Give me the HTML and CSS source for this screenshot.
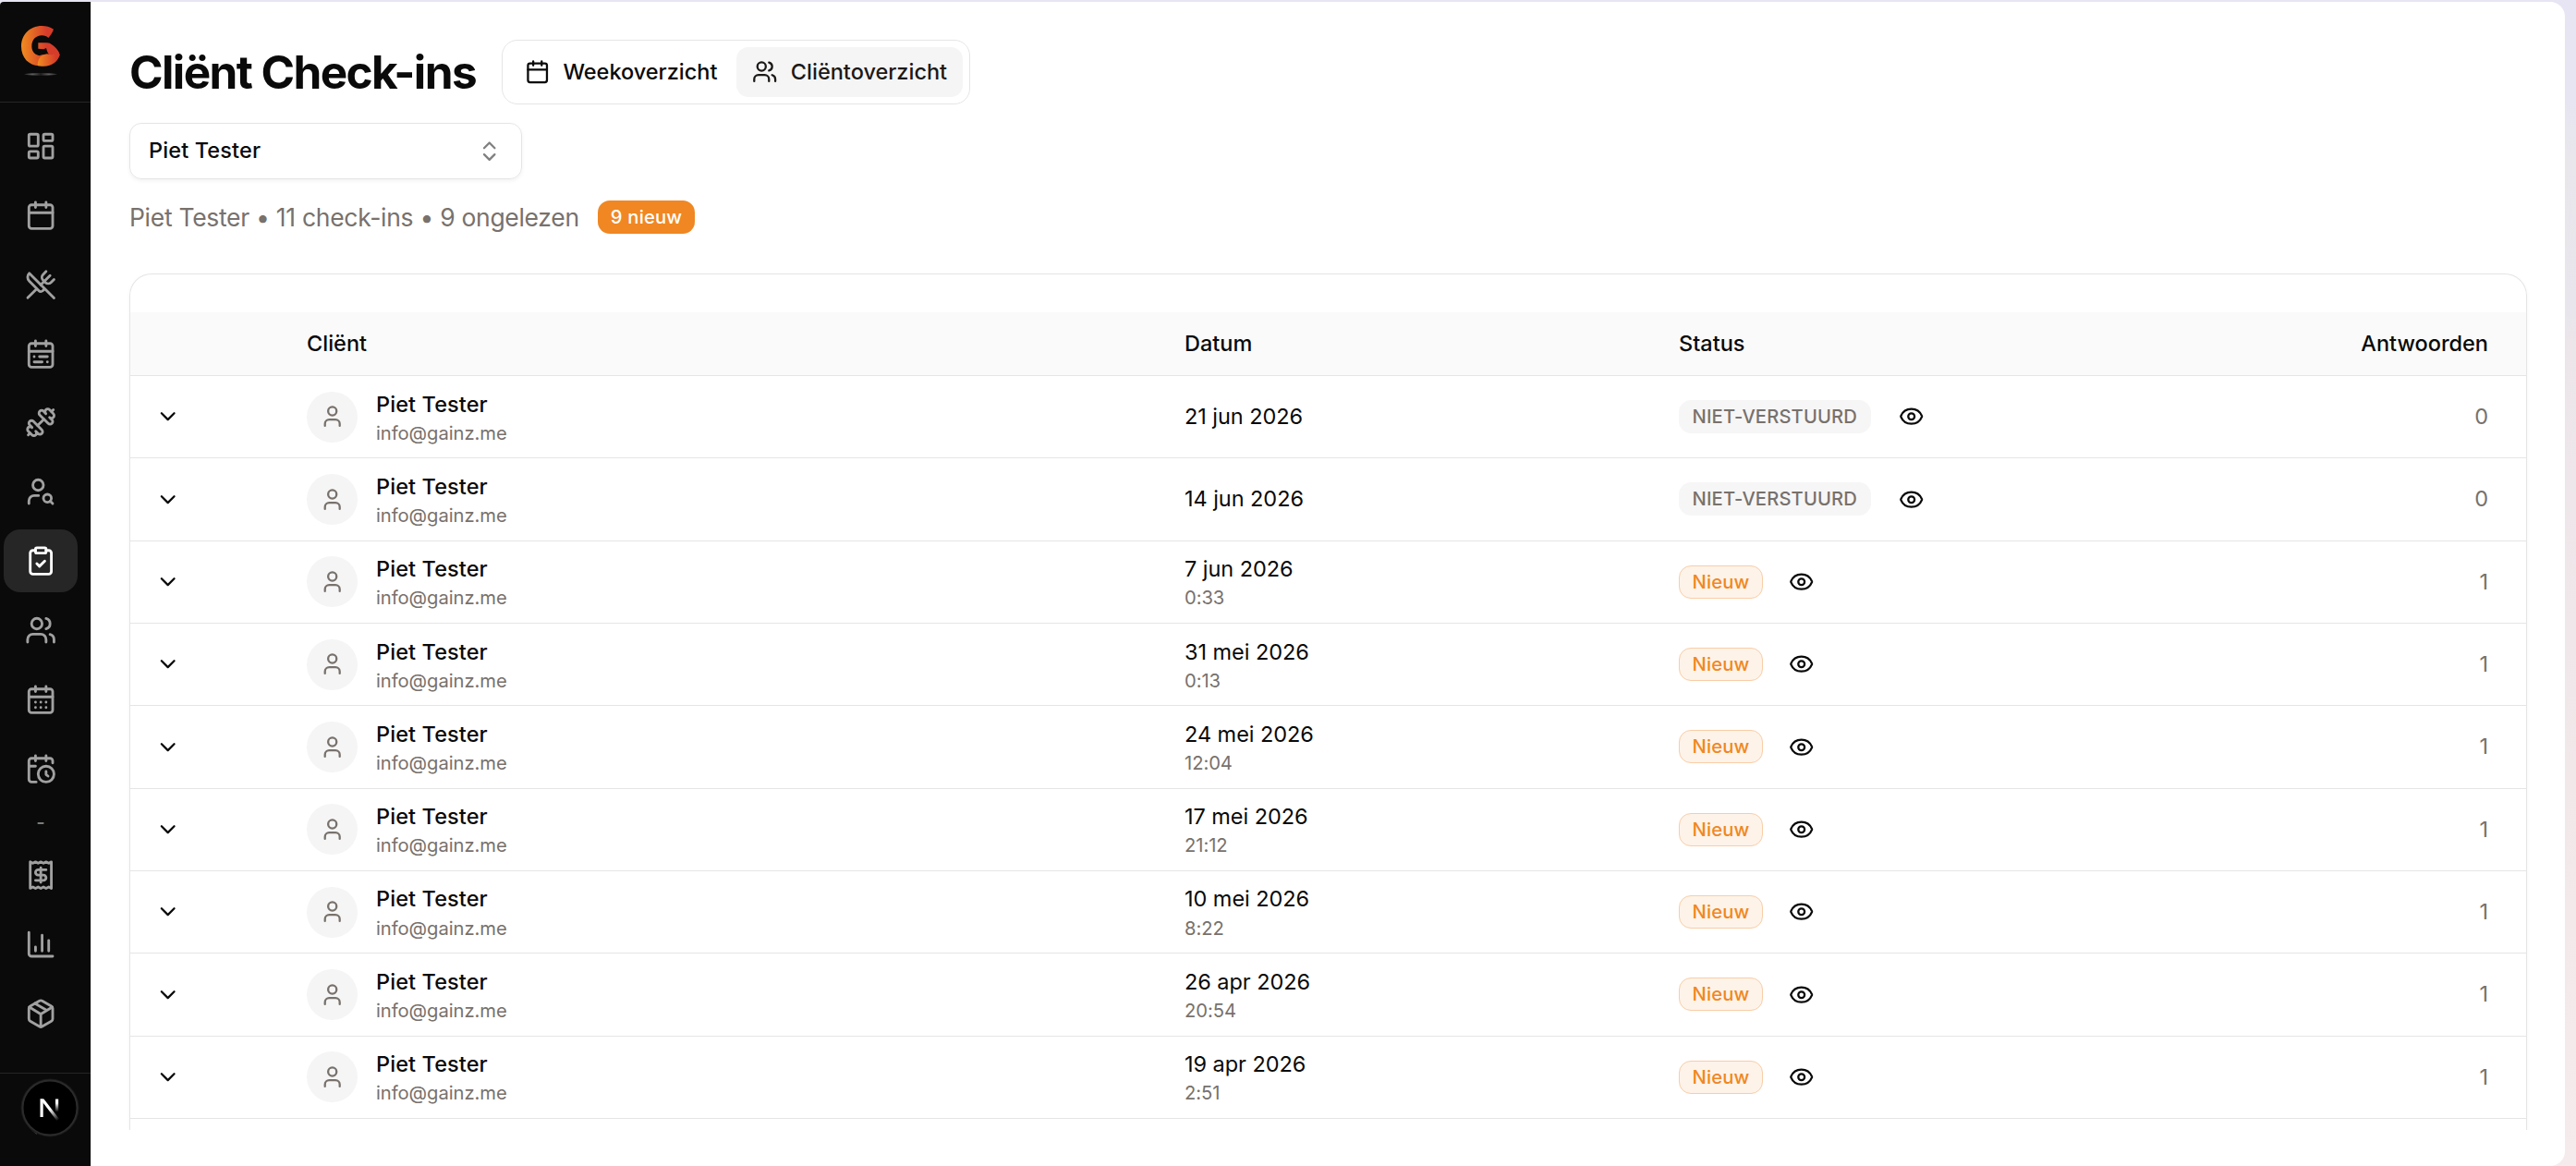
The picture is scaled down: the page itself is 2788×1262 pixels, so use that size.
FILE: index.html
```html
<!DOCTYPE html>
<html lang="nl">
<head>
<meta charset="utf-8">
<title>Cliënt Check-ins</title>
<link rel="stylesheet" href="styles.css">
</head>
<body>
<svg class="sprite" aria-hidden="true">
  <symbol id="dashboard" viewBox="0 0 24 24"><rect x="3" y="3" width="7" height="9" rx="1"/><rect x="14" y="3" width="7" height="5" rx="1"/><rect x="14" y="12" width="7" height="9" rx="1"/><rect x="3" y="16" width="7" height="5" rx="1"/></symbol>
  <symbol id="calendar" viewBox="0 0 24 24"><path d="M8 2v4M16 2v4M3 10h18"/><rect x="3" y="4" width="18" height="18" rx="2"/></symbol>
  <symbol id="utensils" viewBox="0 0 24 24"><path d="m16 2-2.3 2.3a3 3 0 0 0 0 4.2l1.8 1.8a3 3 0 0 0 4.2 0L22 8"/><path d="M15 15 3.3 3.3a4.2 4.2 0 0 0 0 6l7.3 7.3c.7.7 2 .7 2.8 0L15 15Zm0 0 7 7"/><path d="m2.1 21.8 6.4-6.3M19 5l-7 7"/></symbol>
  <symbol id="calendar-range" viewBox="0 0 24 24"><path d="M8 2v4M16 2v4M3 10h18M17 14h-6M13 18H7M7 14h.01M17 18h.01"/><rect x="3" y="4" width="18" height="18" rx="2"/></symbol>
  <symbol id="dumbbell" viewBox="0 0 24 24"><path d="M17.596 12.768a2 2 0 1 0 2.829-2.829l-1.768-1.767a2 2 0 0 0 2.828-2.829l-2.828-2.828a2 2 0 0 0-2.829 2.828l-1.767-1.768a2 2 0 1 0-2.829 2.829z"/><path d="m2.5 21.5 1.4-1.4M20.1 3.9l1.4-1.4"/><path d="M5.343 21.485a2 2 0 1 0 2.829-2.828l1.767 1.768a2 2 0 1 0 2.829-2.829l-6.364-6.364a2 2 0 1 0-2.829 2.829l1.768 1.767a2 2 0 0 0-2.828 2.829z"/><path d="m9.6 14.4 4.8-4.8"/></symbol>
  <symbol id="user-search" viewBox="0 0 24 24"><circle cx="10" cy="7" r="4"/><path d="M10.3 15H7a4 4 0 0 0-4 4v2"/><circle cx="17" cy="17" r="3"/><path d="m21 21-1.9-1.9"/></symbol>
  <symbol id="clipboard" viewBox="0 0 24 24"><rect x="8" y="2" width="8" height="4" rx="1"/><path d="M16 4h2a2 2 0 0 1 2 2v14a2 2 0 0 1-2 2H6a2 2 0 0 1-2-2V6a2 2 0 0 1 2-2h2"/><path d="m9 14 2 2 4-4"/></symbol>
  <symbol id="users" viewBox="0 0 24 24"><path d="M16 21v-2a4 4 0 0 0-4-4H6a4 4 0 0 0-4 4v2"/><circle cx="9" cy="7" r="4"/><path d="M22 21v-2a4 4 0 0 0-3-3.87M16 3.13a4 4 0 0 1 0 7.75"/></symbol>
  <symbol id="calendar-days" viewBox="0 0 24 24"><path d="M8 2v4M16 2v4M3 10h18M8 14h.01M12 14h.01M16 14h.01M8 18h.01M12 18h.01M16 18h.01"/><rect x="3" y="4" width="18" height="18" rx="2"/></symbol>
  <symbol id="calendar-clock" viewBox="0 0 24 24"><path d="M21 7.5V6a2 2 0 0 0-2-2H5a2 2 0 0 0-2 2v14a2 2 0 0 0 2 2h3.5M16 2v4M8 2v4M3 10h5M17.5 17.5 16 16.3V14"/><circle cx="16" cy="16" r="6"/></symbol>
  <symbol id="receipt" viewBox="0 0 24 24"><path d="M4 2v20l2-1 2 1 2-1 2 1 2-1 2 1 2-1 2 1V2l-2 1-2-1-2 1-2-1-2 1-2-1-2 1Z"/><path d="M16 8h-6a2 2 0 1 0 0 4h4a2 2 0 1 1 0 4H8M12 17.5v-11"/></symbol>
  <symbol id="chart" viewBox="0 0 24 24"><path d="M3 3v16a2 2 0 0 0 2 2h16M18 17V9M13 17V5M8 17v-3"/></symbol>
  <symbol id="package" viewBox="0 0 24 24"><path d="M11 21.73a2 2 0 0 0 2 0l7-4A2 2 0 0 0 21 16V8a2 2 0 0 0-1-1.73l-7-4a2 2 0 0 0-2 0l-7 4A2 2 0 0 0 3 8v8a2 2 0 0 0 1 1.73zM12 22V12"/><path d="m3.3 7 7.703 4.734a2 2 0 0 0 1.994 0L20.7 7M7.5 4.27l9 5.15"/></symbol>
  <symbol id="updown" viewBox="0 0 24 24"><path d="m7 15 5 5 5-5M7 9l5-5 5 5"/></symbol>
  <symbol id="chevron" viewBox="0 0 24 24"><path d="m6 9 6 6 6-6"/></symbol>
  <symbol id="user" viewBox="0 0 24 24"><path d="M19 21v-2a4 4 0 0 0-4-4H9a4 4 0 0 0-4 4v2"/><circle cx="12" cy="7" r="4"/></symbol>
  <symbol id="eye" viewBox="0 0 24 24"><path d="M2.062 12.348a1 1 0 0 1 0-.696 10.75 10.75 0 0 1 19.876 0 1 1 0 0 1 0 .696 10.75 10.75 0 0 1-19.876 0"/><circle cx="12" cy="12" r="3"/></symbol>
</svg>

<div class="window">
  <aside class="sidebar">
    <div class="brand">
      <svg class="logo" viewBox="0 0 198 216">
        <defs>
          <linearGradient id="flame" gradientUnits="userSpaceOnUse" x1="27" y1="0" x2="110" y2="0"><stop offset="0" stop-color="#f08c20"/><stop offset="1" stop-color="#d63c2a"/></linearGradient>
          <linearGradient id="arm" gradientUnits="userSpaceOnUse" x1="80" y1="0" x2="140" y2="0"><stop offset="0" stop-color="#f08c20"/><stop offset="1" stop-color="#d63c2a"/></linearGradient>
          <linearGradient id="line" x1="0" x2="1"><stop offset="0" stop-color="#222"/><stop offset=".25" stop-color="#606060"/><stop offset=".5" stop-color="#1c1c1c"/><stop offset=".75" stop-color="#606060"/><stop offset="1" stop-color="#222"/></linearGradient>
        </defs>
        <path fill="url(#flame)" d="M132 38C120 30 107 27 94 27 54 27 27 56 27 94c0 36 24 62 58 63l8-33C73 124 61 112 61 93c0-20 13-35 33-35 9 0 16 3 21 8 7-8 13-17 17-28Z"/>
        <path fill="url(#flame)" d="M82 82h28c7 0 12 2 16 6 12 8 24 20 26 34l-20 22-40-4-7-16c11-4 21-5 33-2-5-7-7-12-10-23l-8 4-18-2Z"/>
        <path fill="url(#arm)" d="M80 156c0-22 12-36 31-38 8 3 15 5 21 1l20 1c-5 23-26 40-58 38-5 0-10-1-14-2Z"/>
        <ellipse fill="url(#line)" cx="90" cy="184" rx="54" ry="4"/>
      </svg>
    </div>
    <nav class="nav">
      <a class="item"><svg class="icon"><use href="#dashboard"/></svg></a>
      <a class="item"><svg class="icon"><use href="#calendar"/></svg></a>
      <a class="item"><svg class="icon"><use href="#utensils"/></svg></a>
      <a class="item"><svg class="icon"><use href="#calendar-range"/></svg></a>
      <a class="item"><svg class="icon"><use href="#dumbbell"/></svg></a>
      <a class="item"><svg class="icon"><use href="#user-search"/></svg></a>
      <a class="item active"><svg class="icon"><use href="#clipboard"/></svg></a>
      <a class="item"><svg class="icon"><use href="#users"/></svg></a>
      <a class="item"><svg class="icon"><use href="#calendar-days"/></svg></a>
      <a class="item"><svg class="icon"><use href="#calendar-clock"/></svg></a>
      <div class="divider">-</div>
      <a class="item"><svg class="icon"><use href="#receipt"/></svg></a>
      <a class="item"><svg class="icon"><use href="#chart"/></svg></a>
      <a class="item"><svg class="icon"><use href="#package"/></svg></a>
    </nav>
    <div class="account"></div>
    <svg class="devtools" viewBox="0 0 66 66">
      <defs>
        <linearGradient id="n1" x1="0" y1="0" x2="0" y2="1"><stop offset=".3" stop-color="#fff"/><stop offset="1" stop-color="#fff" stop-opacity="0"/></linearGradient>
        <linearGradient id="n2" gradientUnits="userSpaceOnUse" x1="34" y1="34" x2="43" y2="46"><stop offset="0" stop-color="#fff"/><stop offset="1" stop-color="#fff" stop-opacity="0"/></linearGradient>
      </defs>
      <path d="M9 50a30 30 0 0 0 10 11" fill="none" stroke="#4a4a4a" stroke-width="1.5"/>
      <circle cx="33" cy="33" r="31.5" fill="#1a1a1a"/>
      <circle cx="33" cy="33" r="29.5" fill="#000" stroke="#2b2b2b" stroke-width="2"/>
      <path d="M22.5 23.500h3.200v19.500h-3.200z" fill="#fff"/>
      <path d="M39 23.500h3.200v14h-3.200z" fill="url(#n1)"/>
      <path d="M22.500 23.500h4l16.500 21.500-2.500 2z" fill="url(#n2)"/>
    </svg>
  </aside>

  <main class="main">
    <header class="top">
      <h1 class="title">Cliënt Check-ins</h1>
      <div class="tabs">
        <button class="tab"><svg class="icon"><use href="#calendar"/></svg>Weekoverzicht</button>
        <button class="tab selected"><svg class="icon"><use href="#users"/></svg>Cliëntoverzicht</button>
      </div>
    </header>
    <div class="select"><span>Piet Tester</span><svg class="icon"><use href="#updown"/></svg></div>
    <div class="summary"><span class="summary-text">Piet Tester • 11 check-ins • 9 ongelezen</span><span class="count">9 nieuw</span></div>

    <section class="card">
      <div class="row head"><span></span><span>Cliënt</span><span>Datum</span><span>Status</span><span class="answers">Antwoorden</span></div>
      <div class="row"><svg class="icon chev"><use href="#chevron"/></svg><div class="client"><span class="avatar"><svg class="icon"><use href="#user"/></svg></span><div><div class="name">Piet Tester</div><div class="sub">info@gainz.me</div></div></div><div class="date">21 jun 2026</div><div class="status"><span class="pill muted">NIET-VERSTUURD</span><svg class="icon"><use href="#eye"/></svg></div><div class="answers">0</div></div>
      <div class="row"><svg class="icon chev"><use href="#chevron"/></svg><div class="client"><span class="avatar"><svg class="icon"><use href="#user"/></svg></span><div><div class="name">Piet Tester</div><div class="sub">info@gainz.me</div></div></div><div class="date">14 jun 2026</div><div class="status"><span class="pill muted">NIET-VERSTUURD</span><svg class="icon"><use href="#eye"/></svg></div><div class="answers">0</div></div>
      <div class="row"><svg class="icon chev"><use href="#chevron"/></svg><div class="client"><span class="avatar"><svg class="icon"><use href="#user"/></svg></span><div><div class="name">Piet Tester</div><div class="sub">info@gainz.me</div></div></div><div class="date">7 jun 2026<div class="sub">0:33</div></div><div class="status"><span class="pill">Nieuw</span><svg class="icon"><use href="#eye"/></svg></div><div class="answers">1</div></div>
      <div class="row"><svg class="icon chev"><use href="#chevron"/></svg><div class="client"><span class="avatar"><svg class="icon"><use href="#user"/></svg></span><div><div class="name">Piet Tester</div><div class="sub">info@gainz.me</div></div></div><div class="date">31 mei 2026<div class="sub">0:13</div></div><div class="status"><span class="pill">Nieuw</span><svg class="icon"><use href="#eye"/></svg></div><div class="answers">1</div></div>
      <div class="row"><svg class="icon chev"><use href="#chevron"/></svg><div class="client"><span class="avatar"><svg class="icon"><use href="#user"/></svg></span><div><div class="name">Piet Tester</div><div class="sub">info@gainz.me</div></div></div><div class="date">24 mei 2026<div class="sub">12:04</div></div><div class="status"><span class="pill">Nieuw</span><svg class="icon"><use href="#eye"/></svg></div><div class="answers">1</div></div>
      <div class="row"><svg class="icon chev"><use href="#chevron"/></svg><div class="client"><span class="avatar"><svg class="icon"><use href="#user"/></svg></span><div><div class="name">Piet Tester</div><div class="sub">info@gainz.me</div></div></div><div class="date">17 mei 2026<div class="sub">21:12</div></div><div class="status"><span class="pill">Nieuw</span><svg class="icon"><use href="#eye"/></svg></div><div class="answers">1</div></div>
      <div class="row"><svg class="icon chev"><use href="#chevron"/></svg><div class="client"><span class="avatar"><svg class="icon"><use href="#user"/></svg></span><div><div class="name">Piet Tester</div><div class="sub">info@gainz.me</div></div></div><div class="date">10 mei 2026<div class="sub">8:22</div></div><div class="status"><span class="pill">Nieuw</span><svg class="icon"><use href="#eye"/></svg></div><div class="answers">1</div></div>
      <div class="row"><svg class="icon chev"><use href="#chevron"/></svg><div class="client"><span class="avatar"><svg class="icon"><use href="#user"/></svg></span><div><div class="name">Piet Tester</div><div class="sub">info@gainz.me</div></div></div><div class="date">26 apr 2026<div class="sub">20:54</div></div><div class="status"><span class="pill">Nieuw</span><svg class="icon"><use href="#eye"/></svg></div><div class="answers">1</div></div>
      <div class="row"><svg class="icon chev"><use href="#chevron"/></svg><div class="client"><span class="avatar"><svg class="icon"><use href="#user"/></svg></span><div><div class="name">Piet Tester</div><div class="sub">info@gainz.me</div></div></div><div class="date">19 apr 2026<div class="sub">2:51</div></div><div class="status"><span class="pill">Nieuw</span><svg class="icon"><use href="#eye"/></svg></div><div class="answers">1</div></div>
    </section>
  </main>
</div>
</body>
</html>
```
FILE: styles.css
```css
* { box-sizing: border-box; }

body {
  margin: 0;
  height: 1262px;
  padding: 2px 12px 0 0;
  overflow: hidden;
  background: linear-gradient(#e7e5f3 0, #e7e5f1 110px, #e9e7ec 170px, #e8e6ec 340px, #ece5ea 370px, #f3e9ea 1000px, #f5ebec 100%);
  color: #0a0a0a;
  font-family: "Inter", "Liberation Sans", sans-serif;
  font-size: 23.5px;
  line-height: 34.3px;
}

.sprite { position: absolute; width: 0; height: 0; }

.icon {
  flex: none;
  display: block;
  width: 27.4px;
  height: 27.4px;
  fill: none;
  stroke: currentColor;
  stroke-width: 2;
  stroke-linecap: round;
  stroke-linejoin: round;
}

.window {
  display: flex;
  height: 1260px;
  background: #fff;
  border-radius: 4px 16px 16px 0;
  overflow: hidden;
}

/* Sidebar */
.sidebar {
  position: relative;
  flex: none;
  display: flex;
  flex-direction: column;
  width: 99px;
  background: #0a0a0a;
  border-right: 1px solid #e5e5e5;
}

.brand {
  height: 109px;
  padding: 17px 0 0 14px;
  border-bottom: 1px solid #262626;
}

.logo { display: block; width: 66px; height: 72px; }

.nav {
  flex: 1;
  display: flex;
  flex-direction: column;
  gap: 6.9px;
  padding: 13px 0 0 4px;
}

.item {
  display: flex;
  align-items: center;
  justify-content: center;
  width: 80px;
  height: 68px;
  border-radius: 18px;
  color: #a1a1a1;
}

.item .icon { width: 34.3px; height: 34.3px; }
.item.active { background: #262626; color: #fff; }

.divider {
  width: 80px;
  height: 33.3px;
  line-height: 34px;
  text-align: center;
  font-size: 20.5px;
  font-weight: 500;
  color: #7c7c7c;
}

.account { height: 101px; border-top: 1px solid #262626; }

.devtools {
  position: absolute;
  left: 21px;
  bottom: 30px;
  width: 66px;
  height: 66px;
}

/* Main column */
.main {
  flex: 1;
  display: flex;
  flex-direction: column;
  height: 1221px;
  padding: 41px 41px 0;
  overflow: hidden;
}

.top { display: flex; align-items: center; height: 70px; }

.title {
  width: 403px;
  margin: 0;
  font-size: 49.5px;
  line-height: 62px;
  font-weight: 700;
  letter-spacing: -1.6px;
  white-space: nowrap;
}

.tabs {
  display: flex;
  gap: 4px;
  height: 70px;
  padding: 7px;
  border: 1px solid #e5e5e5;
  border-radius: 17px;
}

.tab {
  display: flex;
  align-items: center;
  gap: 14px;
  padding: 0 17px;
  border: 0;
  border-radius: 13px;
  background: none;
  color: inherit;
  font: inherit;
  font-weight: 460;
  letter-spacing: 0;
}

.tab.selected { background: #f5f5f5; color: #1c1917; }

.select {
  display: flex;
  align-items: center;
  justify-content: space-between;
  width: 425px;
  height: 61px;
  margin-top: 20px;
  padding: 0 21px 0 20px;
  border: 1px solid #e5e5e5;
  border-radius: 13px;
  box-shadow: 0 2px 4px rgba(0, 0, 0, .05);
  font-weight: 460;
  letter-spacing: 0.13px;
}

.select .icon { color: #808080; }

.summary {
  display: flex;
  align-items: center;
  gap: 20px;
  height: 36px;
  margin-top: 23px;
  color: #78716c;
}

.summary-text { font-size: 26.5px; letter-spacing: -0.3px; }

.count {
  height: 36px;
  padding: 0 14px;
  border-radius: 13px;
  background: #f08722;
  color: #fff;
  font-size: 20.2px;
  font-weight: 460;
  line-height: 36px;
  letter-spacing: 0.2px;
}

/* Check-in list */
.card {
  flex: 1;
  margin-top: 43px;
  padding-top: 41px;
  border: 1px solid #e5e5e5;
  border-bottom: 0;
  border-radius: 24px 24px 0 0;
  box-shadow: 0 2px 5px rgba(0, 0, 0, .04);
}

.row {
  display: grid;
  grid-template-columns: 191px 950px 535px 1fr auto;
  align-items: center;
  height: 89.33px;
  padding-right: 41px;
  border-bottom: 1px solid #e5e5e5;
}

.row.head {
  height: 69px;
  background: #fafafa;
  font-weight: 470;
}

.chev { margin-left: 27px; }

.client { display: flex; align-items: center; gap: 20px; }

.avatar {
  display: flex;
  align-items: center;
  justify-content: center;
  width: 55px;
  height: 55px;
  border-radius: 50%;
  background: #f5f5f5;
  color: #78716c;
}

.name { font-weight: 460; letter-spacing: 0.1px; }

.sub {
  font-size: 20.2px;
  line-height: 27px;
  letter-spacing: -0.05px;
  color: #78716c;
}

.date { letter-spacing: -0.05px; }

.status { display: flex; align-items: center; gap: 28.500px; }

.pill {
  height: 36px;
  padding: 0 13.5px;
  border: 1px solid #f9cda6;
  border-radius: 13px;
  background: #fef3e9;
  color: #f08722;
  font-size: 20.2px;
  font-weight: 460;
  line-height: 34px;
  letter-spacing: 0.15px;
}

.pill.muted {
  margin-right: 1.500px;
  border-color: #f6f6f6;
  background: #f6f6f6;
  color: #78716c;
}

.answers { text-align: right; color: #78716c; }
.head .answers { color: inherit; }
```
